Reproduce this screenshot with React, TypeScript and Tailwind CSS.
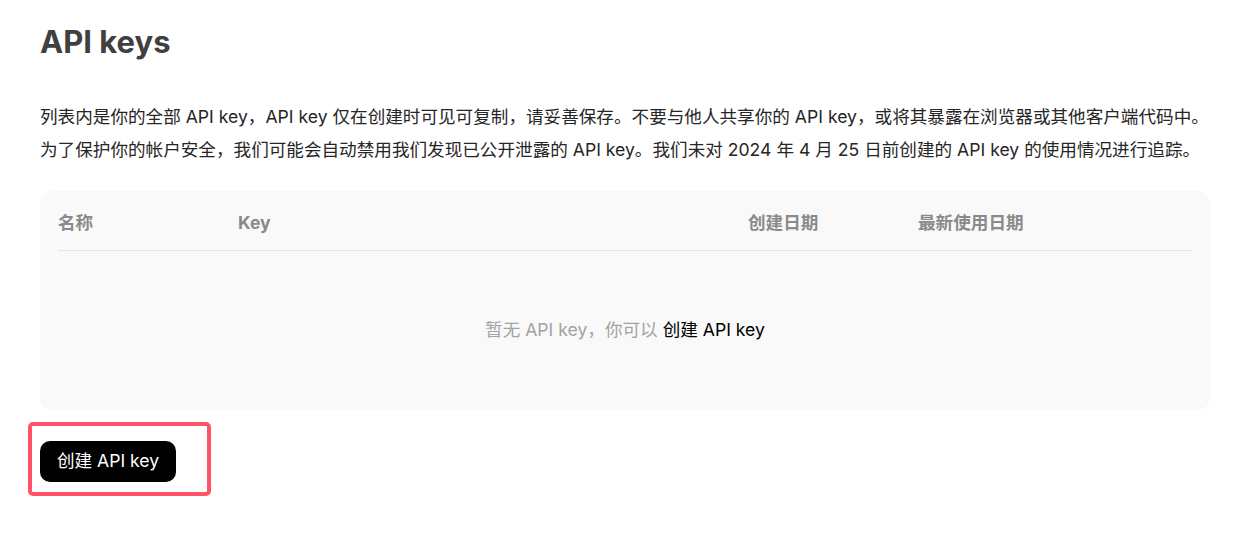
const font = { fontFamily: 'Inter, "Noto Sans CJK SC", sans-serif' };

const columns = [
    { label: '名称', width: 'w-[180px]' },
    { label: 'Key', width: 'w-[510px]' },
    { label: '创建日期', width: 'w-[170px]' },
    { label: '最新使用日期', width: 'flex-1' },
];

const App = () => {
    return (
        <div className="min-h-[540px] bg-white pl-[40px] pt-[21px]" style={font}>
            <h1 className="text-[31px] leading-[42px] font-bold text-[#404040]">API keys</h1>

            <div className="mt-[37px] text-[17.6px] leading-[33px] text-[#262626]">
                <p>列表内是你的全部 API key，API key 仅在创建时可见可复制，请妥善保存。不要与他人共享你的 API key，或将其暴露在浏览器或其他客户端代码中。</p>
                <p>为了保护你的帐户安全，我们可能会自动禁用我们发现已公开泄露的 API key。我们未对 2024 年 4 月 25 日前创建的 API key 的使用情况进行追踪。</p>
            </div>

            <div className="mt-[25px] w-[1170px] rounded-[12px] bg-[#f9f9f9] px-[18px] pt-[19px]">
                <div className="flex border-b border-[#e5e5e5] pb-[15px] text-[17.6px] leading-[25px] font-bold text-[#8a8a8a]">
                    {columns.map((col) => (
                        <div key={col.label} className={col.width}>{col.label}</div>
                    ))}
                </div>
                <div className="flex h-[159px] items-center justify-center text-[17.6px] text-[#a3a3a3]">
                    <span>
                        暂无 API key，你可以 <a className="cursor-pointer text-black">创建 API key</a>
                    </span>
                </div>
            </div>

            <div className="relative mt-[31px] inline-block">
                <button
                    type="button"
                    className="h-[41px] w-[136px] rounded-[10px] bg-black text-[17.6px] text-white"
                >
                    创建 API key
                </button>
                <div className="pointer-events-none absolute -top-[19px] -left-[12px] -right-[35px] -bottom-[14px] rounded-[5px] border-[4px] border-[#ff5468]" />
            </div>
        </div>
    );
};

export default App;
